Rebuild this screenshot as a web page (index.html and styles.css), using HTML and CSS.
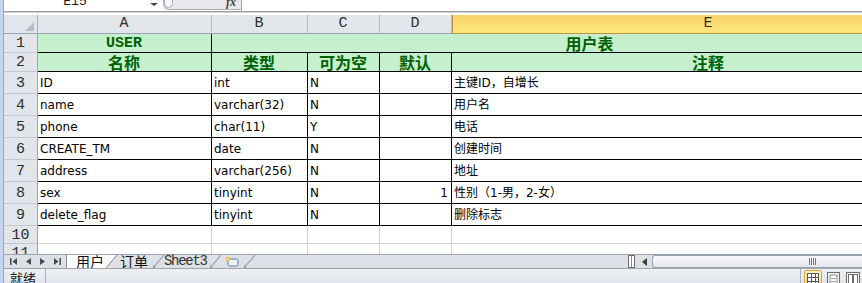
FILE: index.html
```html
<!DOCTYPE html>
<html lang="zh-CN">
<head>
    <meta charset="UTF-8">
    <title>用户表</title>
    <link rel="stylesheet" href="styles.css">
</head>
<body>
    <div class="app">
        <div class="frame-edge"></div>
        <div class="main">

            <!-- Name box and formula bar -->
            <div class="formula-bar">
                <div class="name-box">E15</div>
                <div class="name-arrow"></div>
                <div class="fx-box">
                    <span class="knob"></span>
                    <span class="fx">fx</span>
                </div>
                <div class="formula-input"></div>
            </div>

            <!-- Worksheet grid -->
            <div class="sheet-wrap">
                <div class="sheet">
                    <div class="cell corner"><svg width="9" height="9"><polygon points="9,0 9,9 0,9" fill="#b9bdc3"/></svg></div>
                    <div class="cell col-hd">A</div>
                    <div class="cell col-hd">B</div>
                    <div class="cell col-hd">C</div>
                    <div class="cell col-hd">D</div>
                    <div class="cell col-hd active">E</div>

                    <div class="cell row-hd">1</div>
                    <div class="cell data good latin">USER</div>
                    <div class="cell data good span-4">用户表</div>

                    <div class="cell row-hd">2</div>
                    <div class="cell data good">名称</div>
                    <div class="cell data good">类型</div>
                    <div class="cell data good">可为空</div>
                    <div class="cell data good">默认</div>
                    <div class="cell data good">注释</div>

                    <div class="cell row-hd">3</div>
                    <div class="cell data">ID</div>
                    <div class="cell data">int</div>
                    <div class="cell data">N</div>
                    <div class="cell data"></div>
                    <div class="cell data">主键ID，自增长</div>

                    <div class="cell row-hd">4</div>
                    <div class="cell data">name</div>
                    <div class="cell data">varchar(32)</div>
                    <div class="cell data">N</div>
                    <div class="cell data"></div>
                    <div class="cell data">用户名</div>

                    <div class="cell row-hd">5</div>
                    <div class="cell data">phone</div>
                    <div class="cell data">char(11)</div>
                    <div class="cell data">Y</div>
                    <div class="cell data"></div>
                    <div class="cell data">电话</div>

                    <div class="cell row-hd">6</div>
                    <div class="cell data">CREATE_TM</div>
                    <div class="cell data">date</div>
                    <div class="cell data">N</div>
                    <div class="cell data"></div>
                    <div class="cell data">创建时间</div>

                    <div class="cell row-hd">7</div>
                    <div class="cell data">address</div>
                    <div class="cell data">varchar(256)</div>
                    <div class="cell data">N</div>
                    <div class="cell data"></div>
                    <div class="cell data">地址</div>

                    <div class="cell row-hd">8</div>
                    <div class="cell data">sex</div>
                    <div class="cell data">tinyint</div>
                    <div class="cell data">N</div>
                    <div class="cell data num">1</div>
                    <div class="cell data">性别（1-男，2-女）</div>

                    <div class="cell row-hd">9</div>
                    <div class="cell data">delete_flag</div>
                    <div class="cell data">tinyint</div>
                    <div class="cell data">N</div>
                    <div class="cell data"></div>
                    <div class="cell data">删除标志</div>

                    <div class="cell row-hd">10</div>
                    <div class="cell"></div>
                    <div class="cell"></div>
                    <div class="cell"></div>
                    <div class="cell"></div>
                    <div class="cell"></div>

                    <div class="cell row-hd">11</div>
                    <div class="cell"></div>
                    <div class="cell"></div>
                    <div class="cell"></div>
                    <div class="cell"></div>
                    <div class="cell"></div>
                </div>
            </div>

            <!-- Sheet tabs and horizontal scroll -->
            <div class="tab-bar">
                <div class="tab-nav">
                    <svg width="7" height="7"><rect x="0" y="0" width="1.5" height="7" fill="#4a4a4a"/><polygon points="7,0 7,7 2.5,3.5" fill="#4a4a4a"/></svg>
                    <svg width="5" height="7"><polygon points="5,0 5,7 0,3.5" fill="#4a4a4a"/></svg>
                    <svg width="5" height="7"><polygon points="0,0 0,7 5,3.5" fill="#4a4a4a"/></svg>
                    <svg width="7" height="7"><polygon points="0,0 0,7 4.5,3.5" fill="#4a4a4a"/><rect x="5.5" y="0" width="1.5" height="7" fill="#4a4a4a"/></svg>
                </div>
                <span class="tab tab-active">用户</span>
                <svg class="tab-sep" width="11" height="13"><polygon points="0,0 11,0 0,13" fill="#fff"/><line x1="0" y1="13" x2="11" y2="0" stroke="#7f8791"/></svg>
                <span class="tab tab-order">订单</span>
                <svg class="tab-sep" width="11" height="13"><polygon points="0,13 3,13 0,9.5" fill="#a9b0b9"/><line x1="0" y1="13" x2="11" y2="0" stroke="#7f8791"/></svg>
                <span class="tab tab-latin">Sheet3</span>
                <svg class="tab-sep" width="11" height="13"><polygon points="0,13 3,13 0,9.5" fill="#a9b0b9"/><line x1="0" y1="13" x2="11" y2="0" stroke="#7f8791"/></svg>
                <span class="tab tab-new">
                    <svg width="14" height="11">
                        <rect x="3" y="3" width="10" height="7" rx="1.5" fill="#e9f1fb" stroke="#5d7fa8"/>
                        <circle cx="3" cy="3" r="2.2" fill="#f6b73c"/>
                        <circle cx="3" cy="3" r="0.9" fill="#fff3c4"/>
                    </svg>
                </span>
                <svg class="tab-sep" width="11" height="13"><polygon points="0,13 3,13 0,9.5" fill="#a9b0b9"/><line x1="0" y1="13" x2="11" y2="0" stroke="#7f8791"/></svg>
                <div class="tab-fill"></div>
                <div class="split-box"></div>
                <div class="scroll-left"><svg width="5" height="8"><polygon points="5,0 5,8 0,4" fill="#3c3c3c"/></svg></div>
                <div class="scroll-thumb">
                    <svg class="grip" width="8" height="7">
                        <line x1="0.5" y1="0" x2="0.5" y2="7" stroke="#6f7780"/>
                        <line x1="2.5" y1="0" x2="2.5" y2="7" stroke="#6f7780"/>
                        <line x1="4.5" y1="0" x2="4.5" y2="7" stroke="#6f7780"/>
                        <line x1="6.5" y1="0" x2="6.5" y2="7" stroke="#6f7780"/>
                    </svg>
                </div>
            </div>

            <!-- Status bar -->
            <div class="status-bar">
                <span class="status-text">就绪</span>
                <span class="status-sep"></span>
                <span class="status-fill"></span>
                <span class="status-sep"></span>
                <span class="view-btn view-active">
                    <svg width="12" height="12">
                        <rect x="0.5" y="0.5" width="11" height="11" fill="#fff" stroke="#555"/>
                        <line x1="0" y1="4.5" x2="12" y2="4.5" stroke="#555"/>
                        <line x1="0" y1="8.5" x2="12" y2="8.5" stroke="#555"/>
                        <line x1="4.5" y1="0" x2="4.5" y2="12" stroke="#555"/>
                        <line x1="8.5" y1="0" x2="8.5" y2="12" stroke="#555"/>
                    </svg>
                </span>
                <span class="view-btn">
                    <svg width="13" height="14">
                        <rect x="0.5" y="0.5" width="12" height="13" fill="#f4f5f7" stroke="#6c6c6c"/>
                        <rect x="3" y="3" width="7" height="9" fill="#fff" stroke="#8a8a8a"/>
                        <line x1="4" y1="6.5" x2="9" y2="6.5" stroke="#9a9a9a"/>
                        <line x1="4" y1="9.5" x2="9" y2="9.5" stroke="#9a9a9a"/>
                    </svg>
                </span>
                <span class="view-btn">
                    <svg width="14" height="14">
                        <rect x="0.5" y="0.5" width="13" height="13" fill="#f4f5f7" stroke="#6c6c6c"/>
                        <rect x="2.5" y="2.5" width="4" height="11" fill="#fff" stroke="#6c6c6c"/>
                        <rect x="7.5" y="2.5" width="4" height="11" fill="#fff" stroke="#6c6c6c"/>
                    </svg>
                </span>
            </div>

        </div>
    </div>
</body>
</html>
```

FILE: styles.css
```css
body {
    margin: 0;
    overflow: hidden;
    background-color: #fff;
    font-family: "DejaVu Sans", "Noto Sans CJK SC", sans-serif;
}

.app {
    display: flex;
    width: 862px;
    height: 283px;
}

.frame-edge {
    flex: none;
    width: 3px;
    background-color: #c3d6ee;
    border-right: 1px solid #8ea9cb;
}

.main {
    flex: 1;
    min-width: 0;
    display: flex;
    flex-direction: column;
    overflow: hidden;
}

/* Formula bar */
.formula-bar {
    flex: none;
    display: flex;
    height: 12px;
    box-sizing: border-box;
    border-bottom: 1px solid #9d9d9d;
    overflow: hidden;
}

.name-box {
    width: 142px;
    margin-top: -5px;
    text-align: center;
    font: 13px/14px "Liberation Mono", monospace;
    color: #111;
}

.name-arrow {
    width: 0;
    height: 0;
    margin: 3px 0 0 4px;
    border-left: 4px solid transparent;
    border-right: 4px solid transparent;
    border-top: 3px solid #444;
}

.fx-box {
    display: flex;
    width: 78px;
    margin-left: 5px;
    height: 10px;
    background-color: #e6e8ec;
    border-left: 1px solid #b0b5bc;
    border-bottom: 1px solid #b0b5bc;
    border-bottom-left-radius: 6px;
    box-sizing: border-box;
}

.knob {
    width: 9px;
    height: 16px;
    margin-top: -8px;
    border: 1px solid #a8adb4;
    border-radius: 5px;
    background-color: #f5f6f8;
    box-sizing: border-box;
}

.fx {
    margin: -5px 5px 0 auto;
    font: italic bold 12px/14px "Liberation Serif", serif;
    color: #444;
}

.formula-input {
    flex: 1;
    border-left: 1px solid #a9a9a9;
}

/* Worksheet */
.sheet-wrap {
    flex: none;
    height: 242px;
    box-sizing: border-box;
    border-top: 1px solid #d3d3d3;
    padding-top: 2px;
    overflow: hidden;
}

.sheet {
    display: grid;
    grid-template-columns: 34px 174px 96px 72px 72px 514px;
    grid-template-rows: 19px 19px 19px repeat(7, 22px) 18px 18px;
    width: 962px;
}

.cell {
    display: flex;
    align-items: center;
    box-sizing: border-box;
    padding: 0 3px 0 2px;
    border-right: 1px solid #d4d4d4;
    border-bottom: 1px solid #d4d4d4;
    font-size: 12px;
    line-height: 14px;
    color: #000;
    white-space: nowrap;
    overflow: hidden;
}

.corner,
.col-hd,
.row-hd {
    background-color: #e2e5ea;
    color: #2e2e2e;
    font: 15px/16px "Liberation Mono", monospace;
}

.corner {
    justify-content: flex-end;
    align-items: flex-end;
    padding: 0 3px 2px 0;
    border-right-color: #a9b0b9;
    border-bottom-color: #9aa4b0;
}

.col-hd {
    justify-content: center;
    border-right-color: #b7bcc3;
    border-bottom-color: #9aa4b0;
}

.col-hd.active {
    background: linear-gradient(#f8d169, #ffe97d);
    border-bottom-color: #c2913a;
    box-shadow: inset 1px 0 #c2913a;
}

.row-hd {
    justify-content: center;
    padding: 2px 0 0 0;
    border-right-color: #9aa4b0;
    border-bottom-color: #c3c8ce;
}

.data {
    border-right-color: #000;
    border-bottom-color: #000;
}

.good {
    justify-content: center;
    background-color: #c6efce;
    color: #006100;
    font-family: "Noto Sans CJK SC", sans-serif;
    font-size: 16px;
    font-weight: bold;
    line-height: 17px;
}

.good.latin {
    font-family: "Liberation Mono", monospace;
    font-size: 15px;
}

.span-4 {
    grid-column: span 4;
    border-right: none;
    padding-left: 4px;
}

.num {
    justify-content: flex-end;
}

/* Sheet tabs */
.tab-bar {
    flex: none;
    display: flex;
    height: 14px;
    box-sizing: border-box;
    border-top: 1px solid #9ba3ad;
    background-color: #dde1e7;
}

.tab-nav {
    display: flex;
    align-items: center;
    width: 62px;
    padding-left: 6px;
    gap: 9px;
    box-sizing: border-box;
}

.tab {
    display: flex;
    align-items: center;
    font: 14px/13px "Noto Sans CJK SC", sans-serif;
    color: #111;
}

.tab-active {
    background-color: #fff;
    border-left: 1px solid #8e959e;
    padding: 0 2px 0 9px;
}

.tab-order {
    padding: 0 5px 0 3px;
}

.tab-latin {
    padding: 0 3px 0 0;
    font-family: "Liberation Mono", monospace;
    letter-spacing: -1.3px;
    color: #333;
}

.tab-new {
    padding: 0 5px 0 4px;
}

.tab-sep {
    flex: none;
}

.tab-fill {
    flex: 1;
}

.split-box {
    width: 7px;
    margin-right: 1px;
    box-sizing: border-box;
    border: 1px solid #6b6b6b;
    background: linear-gradient(to right, #fff 2px, #8a8a8a 2px, #8a8a8a 3px, #fff 3px);
}

.scroll-left {
    display: flex;
    align-items: center;
    justify-content: center;
    width: 16px;
}

.scroll-thumb {
    display: flex;
    align-items: center;
    width: 210px;
    flex: none;
    box-sizing: border-box;
    border: 1px solid #9aa3ae;
    border-right: none;
    border-radius: 3px 0 0 3px;
    background: linear-gradient(#f8f9fb, #e3e7ec);
}

.grip {
    margin-left: 156px;
}

/* Status bar */
.status-bar {
    flex: 1;
    display: flex;
    align-items: flex-start;
    border-top: 1px solid #9ea4ac;
    background: linear-gradient(#eef0f3, #dde1e7);
}

.status-text {
    padding: 2px 0 0 6px;
    width: 35px;
    font: 13px/14px "Noto Sans CJK SC", sans-serif;
    color: #222;
}

.status-sep {
    width: 1px;
    align-self: stretch;
    background-color: #aab0b8;
}

.status-fill {
    flex: 1;
}

.view-btn {
    display: flex;
    justify-content: center;
    width: 18px;
    height: 17px;
    margin: 1px 0 0 2px;
    padding-top: 2px;
    box-sizing: border-box;
}

.view-active {
    margin-left: 3px;
    border: 1px solid #e0a23a;
    border-radius: 2px;
    background: linear-gradient(#fff3c4, #fddb78);
}
```
